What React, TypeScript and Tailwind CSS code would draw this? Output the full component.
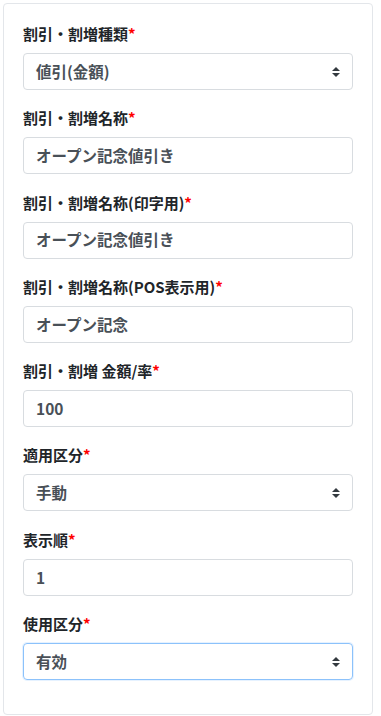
const fields: { label: string; type: "select" | "input"; value: string; focus?: boolean }[] = [
  { label: "割引・割増種類", type: "select", value: "値引(金額)" },
  { label: "割引・割増名称", type: "input", value: "オープン記念値引き" },
  { label: "割引・割増名称(印字用)", type: "input", value: "オープン記念値引き" },
  { label: "割引・割増名称(POS表示用)", type: "input", value: "オープン記念" },
  { label: "割引・割増 金額/率", type: "input", value: "100" },
  { label: "適用区分", type: "select", value: "手動" },
  { label: "表示順", type: "input", value: "1" },
  { label: "使用区分", type: "select", value: "有効", focus: true },
];

function Caret() {
  return (
    <svg width="8" height="10" viewBox="0 0 8 10" className="shrink-0">
      <path d="M4 0 L8 4 L0 4 Z" fill="#343a40" />
      <path d="M4 10 L8 6 L0 6 Z" fill="#343a40" />
    </svg>
  );
}

export default function App() {
  return (
    <div
      className="min-h-[716px] bg-white"
      style={{ fontFamily: '"Noto Sans CJK JP", "Noto Sans", sans-serif' }}
    >
      <div className="ml-[3px] mt-[3px] w-[370px] border border-[#e3e6ea] rounded-[4px] px-[19px] pt-[19px] pb-[17px]">
        {fields.map((f) => (
          <div key={f.label} className="mb-[17.3px]">
            <div className="text-[15px] leading-[22px] font-bold text-[#212529] mb-2">
              {f.label}
              <span className="text-[#ff0000]">*</span>
            </div>
            <div
              className={`h-[37px] flex items-center justify-between pl-3 pr-3 rounded-[4px] border text-[15.5px] font-semibold text-[#495057] ${
                f.focus
                  ? "border-[#8cc2fb] shadow-[0_0_0_1px_rgba(128,189,255,0.2)]"
                  : "border-[#d8dce0]"
              }`}
            >
              <span>{f.value}</span>
              {f.type === "select" && <Caret />}
            </div>
          </div>
        ))}
      </div>
    </div>
  );
}
